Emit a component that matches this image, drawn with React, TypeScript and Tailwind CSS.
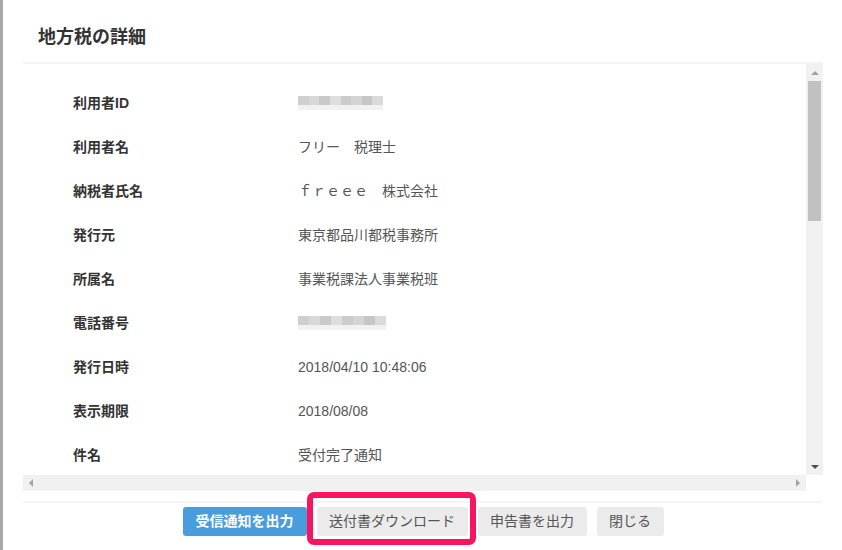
const rows: { label: string; value?: string; blur?: number }[] = [
  { label: "利用者ID", blur: 85 },
  { label: "利用者名", value: "フリー　税理士" },
  { label: "納税者氏名", value: "ｆｒｅｅｅ　株式会社" },
  { label: "発行元", value: "東京都品川都税事務所" },
  { label: "所属名", value: "事業税課法人事業税班" },
  { label: "電話番号", blur: 88 },
  { label: "発行日時", value: "2018/04/10 10:48:06" },
  { label: "表示期限", value: "2018/08/08" },
  { label: "件名", value: "受付完了通知" },
];

// pixelated stand-in for the masked values
const Blur = ({ width }: { width: number }) => {
  const shades = ["#cfcfcf", "#d8d8d8", "#c9c9c9", "#dedede", "#cccccc", "#d4d4d4", "#c6c6c6", "#dadada"];
  const cells = Math.round(width / 11);
  return (
    <div className="flex flex-col" style={{ width }}>
      <div className="flex h-[9px]">
        {Array.from({ length: cells }).map((_, i) => (
          <div key={i} className="flex-1" style={{ background: shades[i % shades.length] }} />
        ))}
      </div>
      <div className="h-[5px] bg-[#f1f1f1]" />
    </div>
  );
};

const App = () => {
  return (
    <div
      className="flex w-[842px] h-[550px] overflow-hidden bg-white text-[#333]"
      style={{ fontFamily: '"Liberation Sans", "Noto Sans CJK JP", sans-serif' }}
    >
      <div className="w-[3px] shrink-0 bg-[#a8a8a8]" />
      <div className="flex-1 flex flex-col pl-[20px] pr-[19px]">
        <div className="h-[62px] flex items-center pl-[15px] pt-[11px]">
          <h1 className="text-[18px] font-bold leading-6 text-[#333]">地方税の詳細</h1>
        </div>
        <div className="h-[2px] bg-[#f5f5f5]" />

        <div className="flex flex-col w-[800px] h-[427px]">
          <div className="flex h-[411px]">
            <div className="flex-1 overflow-hidden pt-[17px]">
              {rows.map((r) => (
                <div key={r.label} className="flex items-center h-[44px] text-[14px] leading-5">
                  <div className="w-[275px] pl-[50px] font-bold text-[#333]">{r.label}</div>
                  <div className="text-[#555]">{r.blur ? <Blur width={r.blur} /> : r.value}</div>
                </div>
              ))}
            </div>
            <div className="w-[17px] bg-[#f1f1f1] flex flex-col items-center">
              <div className="h-[17px] flex items-center justify-center">
                <div className="w-0 h-0 border-l-[4px] border-r-[4px] border-b-[4px] border-l-transparent border-r-transparent border-b-[#a3a3a3]" />
              </div>
              <div className="w-[13px] h-[140px] bg-[#c1c1c1]" />
              <div className="flex-1" />
              <div className="h-[17px] flex items-center justify-center">
                <div className="w-0 h-0 border-l-[4px] border-r-[4px] border-t-[4px] border-l-transparent border-r-transparent border-t-[#505050]" />
              </div>
            </div>
          </div>
          <div className="flex h-[16px]">
            <div className="flex-1 bg-[#f1f1f1] flex items-center justify-between px-[6px]">
              <div className="w-0 h-0 border-t-[4px] border-b-[4px] border-r-[4px] border-t-transparent border-b-transparent border-r-[#a3a3a3]" />
              <div className="w-0 h-0 border-t-[4px] border-b-[4px] border-l-[4px] border-t-transparent border-b-transparent border-l-[#a3a3a3]" />
            </div>
            <div className="w-[17px] bg-white" />
          </div>
        </div>

        <div className="h-[10px]" />
        <div className="h-[2px] bg-[#f5f5f5]" />

        <div className="flex justify-center gap-[10px] pt-[4px] text-[14px]">
          <button className="h-[29px] w-[124px] rounded-[3px] bg-[#4a9ddc] text-white font-bold">受信通知を出力</button>
          <div className="relative">
            <button className="h-[29px] w-[151px] rounded-[3px] bg-[#ebebeb] text-[#555]">送付書ダウンロード</button>
            <div className="absolute left-[-10px] right-[-8px] top-[-15px] bottom-[-9px] border-[6px] border-[#fa1360] rounded-[7px]" />
          </div>
          <button className="h-[29px] w-[109px] rounded-[3px] bg-[#ebebeb] text-[#555]">申告書を出力</button>
          <button className="h-[29px] w-[67px] rounded-[3px] bg-[#ebebeb] text-[#555]">閉じる</button>
        </div>
      </div>
    </div>
  );
};

export default App;
